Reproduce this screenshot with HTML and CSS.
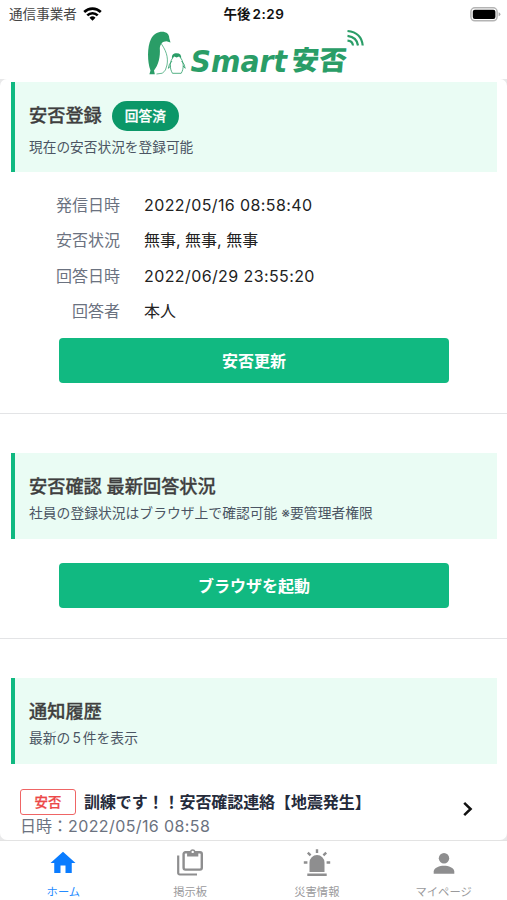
FILE: index.html
```html
<!DOCTYPE html>
<html lang="ja">
<head>
<meta charset="utf-8">
<title>Smart安否</title>
<link rel="stylesheet" href="styles.css">
</head>
<body>
<div class="status">
  <div class="carrier"><span>通信事業者</span>
    <svg width="19" height="14" viewBox="0 0 19 14"><g fill="none" stroke="#000" stroke-width="2.6"><path d="M1.2 5A11.8 11.8 0 0 1 17.8 5"/><path d="M4.3 8.4A7.4 7.4 0 0 1 14.7 8.4"/></g><path d="M9.5 13.8 6.5 10.8A4.3 4.3 0 0 1 12.5 10.8Z"/></svg>
  </div>
  <div class="clock">午後<span>2:29</span></div>
  <div class="battery"><svg width="31" height="15" viewBox="0 0 31 15"><rect x=".9" y=".8" width="26.2" height="13" rx="4" fill="#fff" stroke="#b4b4b4" stroke-width="1.5"/><rect x="2.8" y="2.7" width="22.6" height="9.2" rx="2"/><path d="M28.6 5.3q1.8.5 1.8 2t-1.8 2Z" fill="#aaa"/></svg></div>
</div>
<header class="header">
  <svg class="logo" width="220" height="50" viewBox="146 28 220 50">
    <g fill="#2a9d67">
      <path d="M149.4 74.3L150.5 70.5C147.3 62 147 47 151 39C154 33 160 31 165 32.2C168 33 169.3 35.3 169.3 38.2L170.5 42.5L166.5 41.2C162.5 41.5 160.4 43.5 159.8 48C160.5 57 158.5 65 154 70.5L154.8 74.3Z"/>
      <path d="M172 58.4C171.6 54.8 173.2 53.2 176.6 53.2C180 53.2 181.5 54.9 181.2 58.4L179 56.6L176.6 57.4L174.2 56.6Z"/>
      <text x="190.5" y="71.5" class="logo-latin" textLength="96.5" lengthAdjust="spacingAndGlyphs">Smart</text>
      <text x="291" y="70" class="logo-kanji" transform="translate(6.2 0) skewX(-5)" textLength="55" lengthAdjust="spacingAndGlyphs">安否</text>
    </g>
    <g fill="none" stroke="#2a9d67">
      <path d="M160 42C166 50 168.5 57 167 65Q166 71 162.5 73.2L156.5 74" stroke-width=".7"/>
      <path d="M173.2 57.5C169.5 61 169.4 68.5 172.5 73.3H181.2C184.2 68.5 183.8 61 180.2 57.5M172 61Q168.8 64 168.3 68.3L170.7 66M181.5 61Q184.8 64 185.2 68.3L183 66" stroke-width=".8"/>
      <g stroke-width="2.2"><path d="M347.5 40.7Q352.5 41 353 45.5"/><path d="M347.5 35.8Q357 37 358 45.5"/><path d="M347.5 31Q361.5 32.5 362.7 45.5"/></g>
    </g>
  </svg>
</header>
<main class="screen">
  <div class="sheet">
    <section class="section">
      <div class="panel panel-first">
        <div class="panel-head"><h2>安否登録</h2><span class="badge">回答済</span></div>
        <p>現在の安否状況を登録可能</p>
      </div>
      <dl class="details">
        <dt>発信日時</dt><dd class="digits">2022/05/16 08:58:40</dd>
        <dt>安否状況</dt><dd>無事, 無事, 無事</dd>
        <dt>回答日時</dt><dd class="digits">2022/06/29 23:55:20</dd>
        <dt>回答者</dt><dd>本人</dd>
      </dl>
      <button class="action">安否更新</button>
    </section>
    <section class="section section-next">
      <div class="panel">
        <h2>安否確認 最新回答状況</h2>
        <p>社員の登録状況はブラウザ上で確認可能 ※要管理者権限</p>
      </div>
      <button class="action action-browser">ブラウザを起動</button>
    </section>
    <section class="section section-next">
      <div class="panel">
        <h2>通知履歴</h2>
        <p>最新の<span class="count">5</span>件を表示</p>
      </div>
      <div class="notice">
        <div>
          <div class="notice-title"><span class="tag">安否</span><strong>訓練です！！安否確認連絡【地震発生】</strong></div>
          <div class="notice-date">日時：<span class="digits">2022/05/16 08:58</span></div>
        </div>
        <svg class="chevron" width="10" height="16" viewBox="0 0 10 16"><path d="M1.2 1.8 7.6 8 1.2 14.2" fill="none" stroke="#111" stroke-width="2.5"/></svg>
      </div>
    </section>
  </div>
</main>
<nav class="tabs">
  <a class="tab active"><svg width="30" height="30" viewBox="0 0 24 24"><path d="M10 20v-6h4v6h5v-8h3L12 3 2 12h3v8z"/></svg><span>ホーム</span></a>
  <a class="tab"><svg width="30" height="30" viewBox="0 0 30 30"><path d="M3.2 7.5V25a1.5 1.5 0 0 0 1.5 1.5H22" fill="none" stroke="#8e8e8f" stroke-width="2.2"/><rect x="8.6" y="4.2" width="18.2" height="17.4" rx="1.8" fill="none" stroke="#8e8e8f" stroke-width="2.4"/><path d="M12.1 3.3h2.8a2.9 2.9 0 0 1 5.6 0h2.8v5.2H12.1z"/><circle cx="17.7" cy="3.9" r="1.2" fill="#fff"/></svg><span>掲示板</span></a>
  <a class="tab"><svg width="30" height="30" viewBox="0 0 30 30"><path d="M7.5 24V14.5a7.5 7.5 0 0 1 15 0V24zM5.3 25.4h19.4v2.6H5.3z"/><path d="M15 1.2v3.7M5.8 4.6l2.8 2.7M24.2 4.6l-2.8 2.7M1.8 14.5h3.6M28.2 14.5h-3.6" stroke="#8e8e8f" stroke-width="2.4"/></svg><span>災害情報</span></a>
  <a class="tab"><svg width="30" height="30" viewBox="0 0 30 30"><circle cx="15" cy="10.2" r="5.2"/><path d="M4.7 25.7v-2.2c0-4 6-5.8 10.3-5.8s10.3 1.8 10.3 5.8v2.2z"/></svg><span>マイページ</span></a>
</nav>
</body>
</html>
```

FILE: styles.css
```css
* { box-sizing: border-box; }
body {
  margin: 0;
  width: 507px;
  height: 900px;
  overflow: hidden;
  display: flex;
  flex-direction: column;
  background: #fff;
  color: #222;
  font-family: Inter, "Noto Sans CJK JP", sans-serif;
}
h2, p, dl, dd { margin: 0; }
.status {
  height: 28px;
  flex: none;
  display: grid;
  grid-template-columns: 1fr auto 1fr;
  align-items: center;
  padding: 0 6px 0 9px;
  line-height: 28px;
}
.carrier { display: flex; align-items: center; gap: 6px; font-size: 13.6px; color: #444; }
.clock { font-size: 13.5px; font-weight: 600; color: #111; padding-right: 2px; }
.clock span { margin-left: 2px; letter-spacing: .6px; }
.battery { display: flex; justify-content: flex-end; }
.header { height: 51px; flex: none; padding-left: 146px; }
.logo { display: block; }
.logo-latin { font: italic 700 31px "DejaVu Sans", sans-serif; }
.logo-kanji { font: 900 27px "Noto Sans CJK JP", sans-serif; }
.screen { height: 761px; flex: none; background: #e8e8e9; }
.sheet { height: 761px; padding-top: 3px; overflow: hidden; border-radius: 7px; background: #fff; }
.section { border-bottom: 1px solid #e3e4e6; }
.section-next { padding-top: 39px; height: 225px; }
.section:first-child { height: 332px; }
.panel {
  height: 86px;
  margin: 0 10px 0 11px;
  padding: 20px 0 0 14px;
  border-left: 4px solid #10b981;
  background: #eafcf4;
}
.panel-first { height: 90px; padding-top: 19px; }
.panel-head { display: flex; align-items: center; gap: 10px; height: 30px; }
.panel-head h2 { margin-top: -2px; }
h2 { font-size: 18.2px; line-height: 26px; font-weight: 500; color: #3f3f3f; -webkit-text-stroke: .3px #3f3f3f; }
.panel p { font-size: 13.8px; line-height: 28px; color: #4b5563; }
.panel .panel-head + p { font-size: 13.7px; line-height: 32px; }
.badge {
  height: 30px;
  padding: 0 13px;
  border-radius: 15px;
  background: #0b9768;
  color: #fff;
  font-size: 13.7px;
  font-weight: 500;
  line-height: 30px;
  -webkit-text-stroke: .25px #fff;
}
.count { margin: 0 2px; }
.details {
  display: grid;
  grid-template-columns: 120px 1fr;
  column-gap: 24px;
  grid-auto-rows: 35.4px;
  margin-top: 16px;
  line-height: 35px;
  font-size: 16px;
}
dt { text-align: right; color: #6b7280; }
.digits { letter-spacing: .4px; }
.action {
  display: block;
  width: 390px;
  height: 45px;
  margin: 8.4px 0 0 59px;
  padding: 0;
  border: 0;
  border-radius: 4px;
  background: #11b981;
  color: #fff;
  font: 600 16px/46px Inter, "Noto Sans CJK JP", sans-serif;
}
.action-browser { margin-top: 24px; }
.notice { display: flex; justify-content: space-between; align-items: center; padding: 24px 34px 0 20px; }
.notice-title { display: flex; align-items: center; gap: 8px; height: 27px; font-size: 16px; color: #252b3b; }
.notice-title strong { margin-top: -2px; font-weight: 600; white-space: nowrap; letter-spacing: -.08px; text-spacing-trim: space-all; }
.tag {
  width: 56px;
  height: 26px;
  border: 1.5px solid #ef6565;
  border-radius: 3px;
  color: #ec4848;
  font-size: 13.4px;
  font-weight: 500;
  line-height: 24px;
  text-align: center;
  -webkit-text-stroke: .25px #ec4848;
}
.notice-date { font-size: 16px; line-height: 22px; color: #6b7280; text-spacing-trim: space-all; }
.chevron { margin-bottom: 7px; }
.tabs {
  height: 60px;
  flex: none;
  display: grid;
  grid-template-columns: repeat(4, 1fr);
  border-top: 1px solid #e3e3e3;
}
.tab { display: flex; flex-direction: column; align-items: center; padding-top: 7px; font-size: 11.3px; line-height: 29px; color: #9a9a9c; }
.tab svg { fill: #8e8e8f; overflow: visible; flex: none; }
.active { color: #248bff; }
.active svg { fill: #0a7cff; }
```
